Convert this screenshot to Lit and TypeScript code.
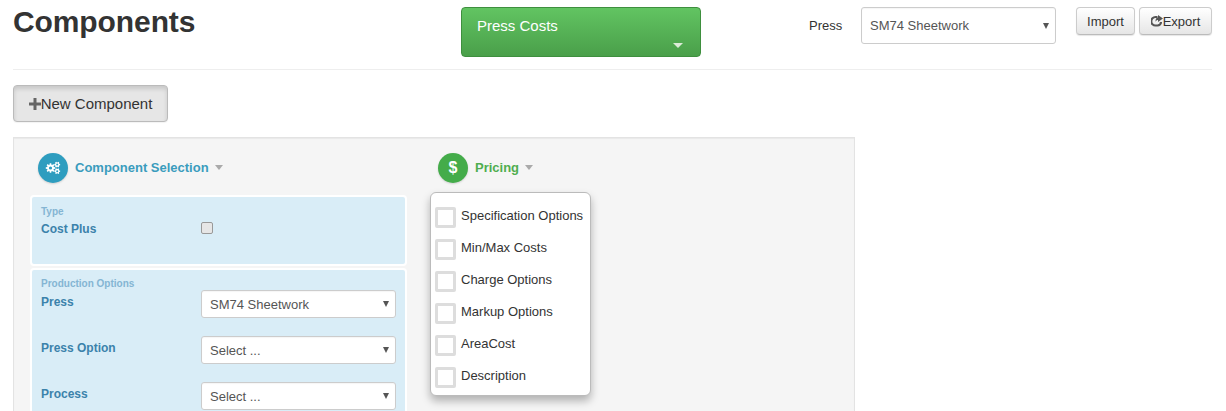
import { LitElement, html, css, svg } from "lit";
import { customElement } from "lit/decorators.js";

const caret = html`<span class="caret"></span>`;

function sel(text: string) {
  return html`<div class="sel"><select><option>${text}</option></select></div>`;
}

/* Builds one toothed wheel with a hole, as an evenodd path. */
function gear(cx: number, cy: number, r: number, hole: number, teeth: number) {
  const pts: string[] = [];
  const inner = r * 0.72;
  const step = (Math.PI * 2) / teeth;
  for (let i = 0; i < teeth; i++) {
    const a = i * step;
    const seq: [number, number][] = [
      [inner, a - step * 0.36],
      [r, a - step * 0.2],
      [r, a + step * 0.2],
      [inner, a + step * 0.36],
    ];
    for (const [rad, ang] of seq) {
      pts.push(`${(cx + rad * Math.cos(ang)).toFixed(2)} ${(cy + rad * Math.sin(ang)).toFixed(2)}`);
    }
  }
  const d = `M${pts.join("L")}Z M${cx - hole} ${cy}a${hole} ${hole} 0 1 0 ${hole * 2} 0a${hole} ${hole} 0 1 0 ${-hole * 2} 0Z`;
  return svg`<path fill-rule="evenodd" d=${d} />`;
}

@customElement("app-root")
export class AppRoot extends LitElement {
  static styles = css`
    :host { display: block; height: 411px; overflow: hidden; box-sizing: border-box; padding: 0 14px 0 13px; background: #fff; color: #333; font-family: "Liberation Sans", Arial, sans-serif; font-size: 13px; }
    * { box-sizing: border-box; }
    .head { display: grid; grid-template-columns: 448px 240px 108px 52px 195px 20px 59px 4px 73px; height: 70px; padding-top: 7px; border-bottom: 1px solid #eee; align-items: start; }
    h1 { margin: -2px 0 0; font-size: 30px; line-height: 33px; font-weight: 700; color: #333; letter-spacing: -0.1px; }
    .green { grid-column: 2; height: 50px; border: 1px solid #3e8f3e; border-radius: 4px; background: linear-gradient(#62c462, #4a9f4a); color: #fff; font-size: 15px; padding: 10px 15px; position: relative; line-height: 16px; }
    .green .tri { position: absolute; right: 17px; top: 35px; width: 0; height: 0; border: 5px solid transparent; border-top-color: #dcebd8; border-bottom: 0; }
    .plabel { grid-column: 4; padding-top: 11px; color: #333; line-height: 16px; font-size: 13px; }
    .head .sel { grid-column: 5; height: 37px; }
    .sel { position: relative; height: 28px; }
    .sel select { appearance: none; -webkit-appearance: none; width: 100%; height: 100%; border: 1px solid #ccc; border-radius: 3px; background: #fff; color: #555; font: 13px "Liberation Sans", Arial, sans-serif; padding: 0 8px; outline: none; box-shadow: inset 0 1px 1px rgba(0,0,0,.04); }
    .sel::after { content: ""; position: absolute; right: 7px; top: 50%; margin-top: -3px; width: 0; height: 0; border-left: 3.5px solid transparent; border-right: 3.5px solid transparent; border-top: 6px solid #555; pointer-events: none; }
    .btn { height: 28px; border: 1px solid #ccc; border-bottom-color: #bbb; border-radius: 4px; background: linear-gradient(#fff, #e6e6e6); font: 13px "Liberation Sans", Arial, sans-serif; color: #333; padding: 0; display: flex; align-items: center; justify-content: center; box-shadow: 0 1px 1px rgba(0,0,0,.1); }
    .imp { grid-column: 7; }
    .exp { grid-column: 9; }
    .new { margin-top: 15px; width: 155px; height: 37px; background: #e6e6e6; border: 1px solid #bbb; border-radius: 4px; font: 15px "Liberation Sans", Arial, sans-serif; color: #333; display: flex; align-items: center; justify-content: center; box-shadow: inset 0 3px 4px rgba(0,0,0,.13), 0 1px 1px rgba(0,0,0,.05); padding: 0; }
    .panel { margin-top: 15px; width: 842px; height: 300px; background: #f5f5f5; border: 1px solid #e3e3e3; padding: 15px 16px; display: flex; gap: 23px; box-shadow: inset 0 1px 1px rgba(0,0,0,.05); }
    .col { width: 377px; flex: none; }
    .col2 { width: 161px; }
    .title { display: flex; align-items: center; height: 30px; margin-left: 8px; font-size: 13px; font-weight: 700; gap: 7px; }
    .title-t { position: relative; top: -1px; display: flex; align-items: center; gap: 6px; }
    .blue { color: #3a9cbd; }
    .grn { color: #4fae4f; }
    .circle { width: 30px; height: 30px; border-radius: 50%; display: flex; align-items: center; justify-content: center; color: #fff; box-shadow: 0 1px 2px rgba(0,0,0,.15); flex: none; }
    .c-blue { background: #2e9dbf; }
    .c-green { background: #44ac4a; font-size: 16px; font-weight: 700; }
    .caret { width: 0; height: 0; border-left: 4.5px solid transparent; border-right: 4.5px solid transparent; border-top: 5px solid #aaa; }
    .card { background: #d9edf7; border: 2px solid #fff; border-radius: 4px; padding: 8px 9px 7px; margin-top: 2px; }
    .card.first { margin-top: 12px; height: 71px; padding-top: 9px; }
    .card h5 { margin: 0 0 4px; font-size: 10px; line-height: 12px; color: #84b5d3; font-weight: 700; }
    .first h5 { margin-bottom: 3px; }
    .row { display: grid; grid-template-columns: 160px 195px; }
    .row label { font-size: 12px; font-weight: 700; color: #3b82ab; line-height: 14px; padding-top: 1px; }
    .row.f { height: 46px; }
    .row.f .sel { margin-top: -4px; }
    .chk { width: 12px; height: 12px; border: 1px solid #999; border-radius: 2px; background: #e6e6e6; margin-top: 1px; }
    .menu { margin-top: 9px; height: 204px; background: #fff; border: 1px solid #bbb; border-radius: 6px; box-shadow: 0 5px 8px rgba(0,0,0,.28); padding: 14px 4px; display: flex; flex-direction: column; gap: 11px; }
    .item { display: flex; height: 21px; color: #333; font-size: 13px; line-height: 17px; gap: 5px; flex: none; }
    .box { width: 21px; height: 21px; border: 3px solid #ddd; border-radius: 2px; flex: none; background: #fff; }
  `;

  render() {
    return html`
      <div class="head">
        <h1>Components</h1>
        <div class="green">Press Costs<span class="tri"></span></div>
        <div class="plabel">Press</div>
        ${sel("SM74 Sheetwork")}
        <button class="btn imp">Import</button>
        <button class="btn exp">
          <svg width="12" height="12" viewBox="0 0 12 12"><path d="M6.500 2H4.500a3.500 3.500 0 0 0 0 8.500H6.500a3.500 3.500 0 0 0 3.500-3.500" fill="none" stroke="#555" stroke-width="2.200"/><path d="M7 0l5 3.500L7 7V5C6 5 5 5.500 4.500 7c0-3 .5-4.500 2.500-4.500z" fill="#555"/></svg>Export
        </button>
      </div>
      <button class="new">
        <svg width="12" height="12" viewBox="0 0 12 12"><path d="M4.500 0h3v4.500H12v3H7.500V12h-3V7.500H0v-3h4.500z" fill="#666"/></svg>New Component
      </button>
      <div class="panel">
        <div class="col">
          <div class="title blue">
            <span class="circle c-blue">
              <svg width="16" height="16" viewBox="0 0 16 16" fill="#fff">
                ${gear(5.5, 8, 4.8, 1.6, 8)}
                ${gear(12.2, 4.6, 3, 1, 6)}
                ${gear(12.2, 11.2, 3, 1, 6)}
              </svg>
            </span>
            <span class="title-t">Component Selection ${caret}</span>
          </div>
          <div class="card first">
            <h5>Type</h5>
            <div class="row"><label>Cost Plus</label><div class="chk"></div></div>
          </div>
          <div class="card">
            <h5>Production Options</h5>
            <div class="row f"><label>Press</label>${sel("SM74 Sheetwork")}</div>
            <div class="row f"><label>Press Option</label>${sel("Select ...")}</div>
            <div class="row f"><label>Process</label>${sel("Select ...")}</div>
          </div>
        </div>
        <div class="col col2">
          <div class="title grn"><span class="circle c-green">$</span><span class="title-t">Pricing ${caret}</span></div>
          <div class="menu">
            ${["Specification Options", "Min/Max Costs", "Charge Options", "Markup Options", "AreaCost", "Description"].map(
              (t) => html`<div class="item"><span class="box"></span><span>${t}</span></div>`
            )}
          </div>
        </div>
      </div>
    `;
  }
}
